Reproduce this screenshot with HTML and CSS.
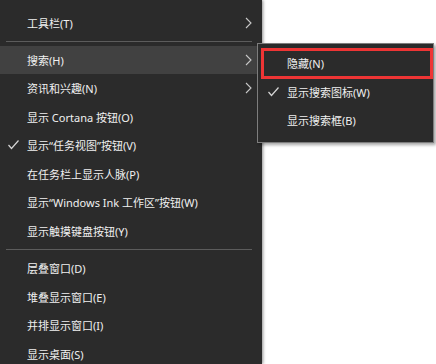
FILE: index.html
```html
<!DOCTYPE html>
<html lang="zh-CN">
<head>
    <meta charset="UTF-8">
    <title>任务栏菜单</title>
    <link rel="stylesheet" href="styles.css">
</head>
<body>
<div class="menu">
    <div class="item"><span class="mark"></span><span class="label">工具栏(T)</span>
        <svg class="arrow" width="7" height="12" viewBox="0 0 7 12"><polyline points="1,1 6,6 1,11"/></svg></div>
    <div class="sep"></div>
    <div class="item active"><span class="mark"></span><span class="label">搜索(H)</span>
        <svg class="arrow" width="7" height="12" viewBox="0 0 7 12"><polyline points="1,1 6,6 1,11"/></svg></div>
    <div class="item"><span class="mark"></span><span class="label">资讯和兴趣(N)</span>
        <svg class="arrow" width="7" height="12" viewBox="0 0 7 12"><polyline points="1,1 6,6 1,11"/></svg></div>
    <div class="item"><span class="mark"></span><span class="label">显示 Cortana 按钮(O)</span></div>
    <div class="item"><span class="mark"><svg width="11" height="10" viewBox="0 0 11 10"><polyline points="0.5,5 3.5,8.5 10.5,0.5"/></svg></span><span class="label">显示“任务视图”按钮(V)</span></div>
    <div class="item"><span class="mark"></span><span class="label">在任务栏上显示人脉(P)</span></div>
    <div class="item"><span class="mark"></span><span class="label">显示“Windows Ink 工作区”按钮(W)</span></div>
    <div class="item"><span class="mark"></span><span class="label">显示触摸键盘按钮(Y)</span></div>
    <div class="sep"></div>
    <div class="item"><span class="mark"></span><span class="label">层叠窗口(D)</span></div>
    <div class="item"><span class="mark"></span><span class="label">堆叠显示窗口(E)</span></div>
    <div class="item"><span class="mark"></span><span class="label">并排显示窗口(I)</span></div>
    <div class="item"><span class="mark"></span><span class="label">显示桌面(S)</span></div>
</div>

<div class="submenu">
    <div class="item sub marked"><span class="mark"></span><span class="label">隐藏(N)</span></div>
    <div class="item sub"><span class="mark"><svg width="11" height="10" viewBox="0 0 11 10"><polyline points="0.5,5 3.5,8.5 10.5,0.5"/></svg></span><span class="label">显示搜索图标(W)</span></div>
    <div class="item sub"><span class="mark"></span><span class="label">显示搜索框(B)</span></div>
</div>
</body>
</html>
```

FILE: styles.css
```css
body {
    margin: 0;
    width: 436px;
    height: 364px;
    overflow: hidden;
    position: relative;
    background: #ffffff;
    font-family: "Noto Sans", "Noto Sans CJK SC", sans-serif;
    font-size: 11px;
    color: #f0f0f0;
}

.menu {
    width: 262px;
    height: 100vh;
    padding-top: 8.5px;
    box-sizing: border-box;
    background: #2b2b2b;
    box-shadow: 1px 0 3px rgba(0, 0, 0, 0.45);
}

.item {
    display: flex;
    align-items: center;
    height: 28.5px;
    padding-left: 8px;
    padding-right: 10px;
}

.item.active {
    background: #414141;
}

.mark {
    width: 19px;
    flex: 0 0 19px;
    display: flex;
    align-items: center;
}

.mark svg polyline {
    fill: none;
    stroke: #d6d6d6;
    stroke-width: 1.2;
}

.label {
    flex: 1;
    white-space: nowrap;
}

.arrow polyline {
    fill: none;
    stroke: #c8c8c8;
    stroke-width: 1.1;
}

.sep {
    height: 1px;
    margin: 3.9px 10px 3.8px 6px;
    background: #5c5c5c;
}

/* flyout for 搜索 */
.submenu {
    position: absolute;
    left: 257px;
    top: 43px;
    width: 177px;
    height: 100px;
    box-sizing: border-box;
    padding-top: 5px;
    background: #2b2b2b;
    border: 1px solid #7d7d7d;
    box-shadow: 2px 2px 3px rgba(0, 0, 0, 0.35);
}

.item.sub {
    padding-left: 10px;
}

.marked {
    position: relative;
}

.marked::after {
    content: "";
    position: absolute;
    left: 3px;
    right: 0;
    top: -1px;
    bottom: -1px;
    border: 3px solid #ee3535;
}
```
